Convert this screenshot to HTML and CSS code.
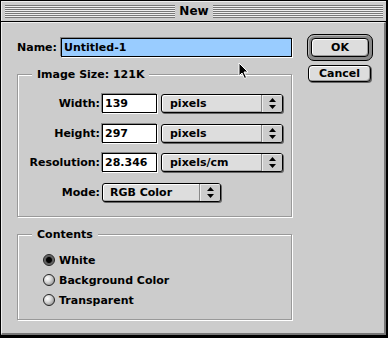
FILE: index.html
```html
<!DOCTYPE html>
<html lang="en">
<head>
    <meta charset="UTF-8">
    <title>New</title>
    <link rel="stylesheet" href="styles.css">
</head>
<body>
    <div class="window">
        <div class="titlebar">
            <span class="stripes"></span>
            <span class="title">New</span>
            <span class="stripes"></span>
        </div>
        <div class="panel">
            <div class="left">
                <div class="name-row">
                    <span class="name-label">Name:</span>
                    <div class="field name-field">Untitled-1</div>
                </div>
                <fieldset class="group size-group">
                    <legend>Image Size: 121K</legend>
                    <div class="row">
                        <span class="label">Width:</span>
                        <div class="field num">139</div>
                        <div class="popup unit">
                            <span class="value">pixels</span>
                            <span class="arrows"><svg width="7" height="11" viewBox="0 0 7 11"><path d="M3.5 0L7 4H0Z M0 7H7L3.5 11Z"/></svg></span>
                        </div>
                    </div>
                    <div class="row">
                        <span class="label">Height:</span>
                        <div class="field num">297</div>
                        <div class="popup unit">
                            <span class="value">pixels</span>
                            <span class="arrows"><svg width="7" height="11" viewBox="0 0 7 11"><path d="M3.5 0L7 4H0Z M0 7H7L3.5 11Z"/></svg></span>
                        </div>
                    </div>
                    <div class="row">
                        <span class="label">Resolution:</span>
                        <div class="field num">28.346</div>
                        <div class="popup unit">
                            <span class="value">pixels/cm</span>
                            <span class="arrows"><svg width="7" height="11" viewBox="0 0 7 11"><path d="M3.5 0L7 4H0Z M0 7H7L3.5 11Z"/></svg></span>
                        </div>
                    </div>
                    <div class="row">
                        <span class="label">Mode:</span>
                        <div class="popup mode">
                            <span class="value">RGB Color</span>
                            <span class="arrows"><svg width="7" height="11" viewBox="0 0 7 11"><path d="M3.5 0L7 4H0Z M0 7H7L3.5 11Z"/></svg></span>
                        </div>
                    </div>
                </fieldset>
                <fieldset class="group contents-group">
                    <legend>Contents</legend>
                    <div class="radio checked">White</div>
                    <div class="radio">Background Color</div>
                    <div class="radio">Transparent</div>
                </fieldset>
            </div>
            <div class="buttons">
                <div class="default-ring"><button class="btn ok">OK</button></div>
                <button class="btn cancel">Cancel</button>
            </div>
        </div>
        <svg class="cursor" width="12" height="18" viewBox="0 0 12 18">
            <path d="M1 1V14L4 11L6.5 16.5L8.5 15.5L6 10H10Z" fill="#000" stroke="#fff" stroke-width="1"/>
        </svg>
    </div>
</body>
</html>
```
FILE: styles.css
```css
body {
    margin: 0;
    background: #000;
    font-family: "DejaVu Sans", sans-serif;
    font-weight: bold;
    font-size: 11px;
    color: #000;
}
.window {
    position: relative;
    width: 387px;
    height: 336px;
    box-sizing: border-box;
    border: 1px solid #000;
    background: #ccc;
    display: flex;
    flex-direction: column;
}
.titlebar {
    height: 20px;
    display: flex;
    align-items: center;
    padding: 0 3px 0 4px;
    border-bottom: 1px solid #000;
    background: #ccc;
    box-shadow: inset 1px 1px #eee;
}
.stripes {
    flex: 1;
    height: 13px;
    background: repeating-linear-gradient(to bottom, #777 0 1px, #eee 1px 2px);
}
.title {
    padding: 0 4px;
    font-size: 12px;
    font-weight: bold;
}
.panel {
    flex: 1;
    display: flex;
    padding: 15px 0 0 15px;
    border-top: 1px solid #eee;
    border-left: 1px solid #eee;
    border-right: 2px solid #777;
    border-bottom: 2px solid #777;
}
.left {
    width: 275px;
    display: flex;
    flex-direction: column;
}
.name-row {
    display: flex;
    height: 19px;
}
.name-label {
    width: 44px;
    line-height: 19px;
}
.field {
    box-sizing: border-box;
    height: 19px;
    border: 1px solid #000;
    background: #fff;
    box-shadow: -1px -1px 0 #888, 1px 1px 0 #fff;
    padding-left: 2px;
    line-height: 17px;
}
.name-field {
    width: 231px;
    background: #99ccff;
}
.group {
    margin: 11px 0 0;
    padding: 13px 0 13px 0;
    border: 1px solid #999;
    box-shadow: inset 1px 1px #fff, 1px 1px #fff;
    min-width: 0;
}
.group legend {
    margin-left: 14px;
    padding: 0 5px;
    line-height: 13px;
    background: #ccc;
}
.row {
    display: flex;
    align-items: flex-start;
    height: 20px;
}
.row + .row {
    margin-top: 9.7px;
}
.label {
    width: 82px;
    margin-right: 2px;
    text-align: right;
    line-height: 19px;
}
.num {
    width: 55px;
}
.popup {
    box-sizing: border-box;
    height: 19px;
    display: flex;
    border: 1px solid #000;
    border-radius: 3px;
    background: #ddd;
    box-shadow: inset 1px 1px #fff, inset -1px -1px #aaa, 1px 1px 0 #666;
    overflow: hidden;
}
.popup .value {
    flex: 1;
    padding-left: 8px;
    line-height: 17px;
}
.unit {
    width: 122px;
    margin-left: 4px;
}
.mode {
    width: 119px;
}
.mode .value {
    padding-left: 7px;
}
.arrows {
    width: 20px;
    display: flex;
    align-items: center;
    justify-content: center;
    border-left: 1px solid #888;
    background: #ccc;
    box-shadow: inset 1px 1px #eee;
}
.contents-group {
    padding: 9px 0 9px 0;
}
.radio {
    display: flex;
    align-items: center;
    gap: 4px;
    height: 20px;
    margin-left: 25px;
}
.radio::before {
    content: "";
    width: 12px;
    height: 12px;
    box-sizing: border-box;
    border: 1px solid #222;
    border-radius: 50%;
    background: radial-gradient(circle at 35% 35%, #fff 0, #ddd 35%, #999 80%);
}
.radio.checked::before {
    background: radial-gradient(circle, #000 0 2.5px, #555 3.5px, #999 100%);
}
.buttons {
    display: flex;
    flex-direction: column;
    align-items: flex-start;
    margin: -4px 0 0 15px;
}
.default-ring {
    width: 66px;
    box-sizing: border-box;
    padding: 3px;
    border: 1px solid #000;
    border-radius: 7px;
    background: #888;
    box-shadow: inset 1px 1px #bbb;
}
.btn {
    box-sizing: border-box;
    padding: 0;
    font: inherit;
    color: #000;
    border: 1px solid #000;
    border-radius: 4px;
    background: #ddd;
    box-shadow: inset 1px 1px #fff, inset -1px -1px #999;
}
.ok {
    display: block;
    width: 58px;
    height: 19px;
}
.cancel {
    width: 63px;
    height: 17px;
    margin: 4px 0 0 1px;
    box-shadow: inset 1px 1px #fff, inset -1px -1px #999, 1px 1px 0 #666;
}
.cursor {
    position: absolute;
    left: 237px;
    top: 61px;
}
```
